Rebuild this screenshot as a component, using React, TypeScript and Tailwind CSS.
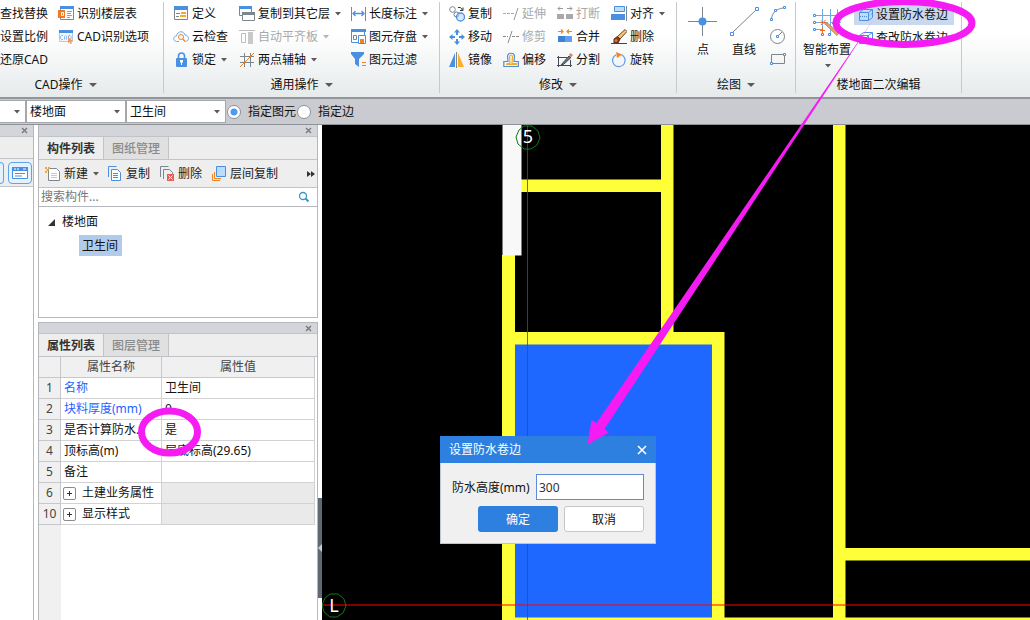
import React from "react";

type Kids = { children?: React.ReactNode };

function Svg({ children, size = "size-4" }: Kids & { size?: string }) {
  const box = size === "size-[30px]" ? "0 0 30 30" : "0 0 16 16";
  return (
    <svg viewBox={box} className={`${size} shrink-0`} fill="none" stroke="#7b868f" strokeWidth="1" aria-hidden="true">
      {children}
    </svg>
  );
}

function Caret({ dim = false }: { dim?: boolean }) {
  return (
    <svg viewBox="0 0 6 4" className="ml-[5px] h-1 w-1.5 shrink-0" fill={dim ? "#b4b4b4" : "#5a5a5a"} aria-hidden="true">
      <path d="M0 0h6L3 3.5z" />
    </svg>
  );
}

const B = "#4a90e2";
const O = "#ee8426";

const IcFloorTable = () => (
  <Svg>
    <path d="M2.500 2.500h13v11h-13z" fill="#fff" />
    <path d="M2 0h14v3H2z" fill={B} stroke="none" />
    <path d="M0 4h7v8H0z" fill="#f07a22" stroke="none" />
    <path d="M3.500 6.500h2v3h-2z" stroke="#fff" />
    <path d="M9 5.500h5M9 7.500h4M9 9.500h5M9 11.500h3" stroke="#9aa3aa" />
  </Svg>
);
const IcCad = () => (
  <Svg>
    <path d="M1.500 1.500h13v11h-13z" fill="#f2f7fd" stroke="#b5cbe4" />
    <path d="M1 1h14v3H1z" fill={B} stroke="none" />
    <path d="M5 6.500H3.500l-1 1v2l1 1H5M6.500 10.500v-3l1-1 1 1v3M10.500 6.500v4H12l1-1v-2l-1-1z" stroke="#8db4e2" />
    <path d="M10 8l5 4-2 .5 1 2-1.500.6-.8-2L10 14.500z" fill="#f09a6a" stroke="none" />
  </Svg>
);
const IcDefine = () => (
  <Svg>
    <path d="M1.500 2.500h13v11h-13z" fill="#fff" />
    <path d="M1 0h14v4H1z" fill={B} stroke="none" />
    <path d="M3 7.500h4M3 10.500h3" />
    <path d="M8 6h5v2H8zM7 9h6v2H7z" fill="#f9a82a" stroke="none" />
  </Svg>
);
const IcCloud = () => (
  <Svg>
    <path d="M6 12.500H3.500C-.5 12 0 7 3.500 7 4.500 1.500 11 1.500 12 6c4.500.5 4.500 6 .5 6.500" stroke="#6ba6ea" />
    <circle cx="8" cy="8" r="2.500" stroke={O} />
    <path d="M10 10l2 2.500" stroke={O} strokeWidth="1.500" />
  </Svg>
);
const IcLock = () => (
  <Svg>
    <path d="M5.500 7V4a3 3 0 0 1 6 0v3" stroke={B} strokeWidth="1.600" />
    <rect x="3" y="6" width="11" height="9" rx="1" fill={B} stroke="none" />
    <path d="M8.500 8v2.500" stroke="#fff" strokeWidth="3" />
    <path d="M8.500 10v3" stroke="#fff" />
  </Svg>
);
const IcCopyFloors = () => (
  <Svg>
    <path d="M.5 1.500h12v8H.500z" fill="#fff" stroke={B} />
    <path d="M0 0h13v3H0z" fill={B} stroke="none" />
    <path d="M3.500 7.500h12v7h-12z" fill="#fff" />
    <path d="M3 6h13v3H3z" fill="#7b868f" stroke="none" />
  </Svg>
);
const IcAlignSlab = () => (
  <Svg>
    <path d="M0 1.500h16M2.500 4.500h4v9h-4z" stroke="#bdbdbd" />
    <path d="M9 3h5v12H9z" fill="#c9c9c9" stroke="none" />
  </Svg>
);
const IcTwoAxis = () => (
  <Svg>
    <path d="M5.500 1v14M11.500 1v14M1 4.500h14M1 10.500h14" />
    <path d="M1 15L15 1" stroke={O} />
  </Svg>
);
const IcLength = () => (
  <Svg>
    <path d="M1.500 1v14M15.500 1v14" />
    <path d="M3 7.500h11M5.500 5L3 7.500 5.500 10M11.500 5L14 7.500 11.500 10" stroke={B} strokeWidth="1.300" />
  </Svg>
);
const IcSave = () => (
  <Svg>
    <path d="M1.500 1.500h13v12h-13z" fill="#fff" stroke={B} />
    <path d="M1 0h15v3H1z" fill={B} stroke="none" />
    <path d="M3.500 6.500h3v4h-3z" />
    <path d="M8.500 6.500h7v8h-7z" fill="#fff" stroke={B} />
    <path d="M10 10h4v4h-4z" fill={O} stroke="none" />
  </Svg>
);
const IcFilter = () => (
  <Svg>
    <path d="M1 0h13v2L9 7v8l-4-3V7L1 2z" fill={B} stroke="none" />
    <path d="M12 10.500h4M12 13.500h4" stroke={O} />
  </Svg>
);
const IcCopy3 = () => (
  <Svg>
    <circle cx="3.500" cy="3.500" r="2.800" />
    <path d="M9 1.500h2.500L13.500 4M14 1.500v3h-3" stroke="#333" />
    <circle cx="7.500" cy="8.500" r="2.500" stroke="#6d7a86" />
    <circle cx="11.500" cy="11" r="4" fill="#b9dcff" fillOpacity=".6" stroke={B} strokeWidth="1.300" />
  </Svg>
);
const IcMove = () => (
  <Svg>
    <path d="M8 0l3 3.500H9V6H7V3.500H5zM8 16l3-3.500H9V10H7v2.500H5zM0 8l3.500-3v2H6v2H3.500v2zM16 8l-3.500-3v2H10v2h2.500v2z" fill={B} stroke="none" />
  </Svg>
);
const IcMirror = () => (
  <Svg>
    <path d="M6 1v14H0z" fill={B} stroke="none" />
    <path d="M9 1v14h6z" fill="#f9b02a" stroke="none" />
    <path d="M7.500 0v16" />
  </Svg>
);
const IcExtend = () => (
  <Svg>
    <path d="M0 7.500h11" stroke="#ababab" strokeDasharray="3 1" />
    <path d="M15 2l-4 12" stroke="#9a9a9a" />
  </Svg>
);
const IcTrim = () => (
  <Svg>
    <path d="M0 7.500h5M9 7.500h7" stroke="#8a8a8a" strokeDasharray="3 1" />
    <path d="M9 2L5 14" stroke="#8a8a8a" />
  </Svg>
);
const IcOffset = () => (
  <Svg>
    <path d="M.8 14.500h14.500v-5H11L11.500 4C11 .3 5 .3 4.500 4L5 9.500H.8z" stroke={B} strokeWidth="1.200" />
    <path d="M3 12.500h11M3.500 11.500H7L6.500 4.500c.5-2 2.500-2 3 0L9 11.500h5" stroke="#f3ae20" strokeWidth="1.200" />
  </Svg>
);
const IcBreak = () => (
  <Svg>
    <path d="M0 8h7v5H0zM9 8h7v5H9z" fill="#a9a9a9" stroke="none" />
    <path d="M1 2.500h5M3 .5l-2 2 2 2M10 2.500h5M13 .5l2 2-2 2" stroke="#999" />
  </Svg>
);
const IcMerge = () => (
  <Svg>
    <path d="M1 7h7v6H1z" fill="#3d82d4" stroke="none" />
    <path d="M8 7h7v6H8z" fill="#5ea1ee" stroke="none" />
    <path d="M1 2.500h5M4 .5l2 2-2 2M15 2.500h-5M12 .5l-2 2 2 2" stroke={O} strokeWidth="1.200" />
  </Svg>
);
const IcSplit = () => (
  <Svg>
    <path d="M1.500 4v11M0 5.500h10M0 13.500h15M13.500 8v7" stroke="#444b55" />
    <path d="M4 13l8-9 2 1.500L7 12z" fill="#6b7685" stroke="#444b55" />
    <path d="M12 3l1.500-2L16 3l-1.500 2z" fill="#f07a50" stroke="none" />
  </Svg>
);
const IcAlign = () => (
  <Svg>
    <path d="M3.500.5h10v5h-10z" fill="#bcdcff" stroke={B} />
    <path d="M0 8h14v6H0z" fill={B} stroke="none" />
    <path d="M15.500 0v15" />
  </Svg>
);
const IcErase = () => (
  <Svg>
    <path d="M6 8l8-7.500 2 2L9 10z" fill="#ffc46a" stroke="#5b4634" />
    <path d="M3 10l3.500-2.500L9 10l-2 4H3z" fill="#8a3b22" stroke="#4b2c20" />
    <circle cx="5" cy="11.500" r="1.500" fill="#f06b3c" stroke="none" />
    <path d="M0 14.500h16" stroke="#444" />
  </Svg>
);
const IcRotate = () => (
  <Svg>
    <path d="M10 2.500a6.300 6.300 0 1 1-5 .3" stroke="#5c9de8" strokeWidth="1.200" />
    <path d="M5 0l6 2.500L6 6z" fill={O} stroke="none" />
  </Svg>
);
const IcArc = () => (
  <Svg>
    <path d="M1.500 13C2 7 6 3 13 2" />
    <path d="M.5 12.500h2v2h-2zM4.500 3.500h2v2h-2zM13.500.5h2v2h-2z" fill="#fff" stroke={B} />
  </Svg>
);
const IcCircle = () => (
  <Svg>
    <circle cx="7.500" cy="7.500" r="7" />
    <path d="M8 7l4-4" stroke={B} />
    <path d="M6.500 6.500h2v2h-2z" fill="#fff" stroke={B} />
  </Svg>
);
const IcRect = () => (
  <Svg>
    <path d="M1.500 2.500h13v9h-13z" />
    <path d="M.5 10.500h2v2h-2zM13.500 1.500h2v2h-2z" fill="#fff" stroke={B} />
  </Svg>
);
const IcBox = ({ edit = false }: { edit?: boolean }) => (
  <Svg>
    <path d="M1.500 5.500h9v8h-9zM1.500 5.500l4-3h9l-4 3M14.500 2.500v8l-4 3" stroke={B} />
    {edit ? <path d="M5 11l5-5M5 8v3h3" stroke={B} /> : <path d="M2 9.500h8l4-3" stroke={B} strokeDasharray="1 1" />}
  </Svg>
);

function Tool({ icon, text, caret, dim }: { icon?: React.ReactNode; text: string; caret?: boolean; dim?: boolean }) {
  return (
    <button type="button" disabled={dim} className={`flex h-[23px] items-center pb-px whitespace-nowrap ${dim ? "text-[#a9a9a9]" : ""}`}>
      {icon}
      <span className={icon ? "ml-[3px]" : ""}>{text}</span>
      {caret && <Caret dim={dim} />}
    </button>
  );
}

function Group({ title, width, pad = "", caret = true, children }: Kids & { title: string; width: string; pad?: string; caret?: boolean }) {
  return (
    <>
      <section className={`flex shrink-0 flex-col pt-[3px] ${width}`}>
        <div className="h-[69px]">{children}</div>
        <h2 className={`flex h-[25px] items-center justify-center ${pad}`}>
          {title}
          {caret && (
            <svg viewBox="0 0 8 4" className="ml-1.5 h-1 w-2" fill="#5a5a5a" aria-hidden="true">
              <path d="M0 0h8L4 4z" />
            </svg>
          )}
        </h2>
      </section>
      <div className="mt-0.5 mb-1 w-px shrink-0 bg-[#c6cacd]" />
    </>
  );
}

function Ribbon() {
  return (
    <header className="flex h-[99px] shrink-0 overflow-hidden border-b-2 border-[#92969b] bg-linear-to-b from-white from-35% to-[#e6eaeb]">
      <Group title="CAD操作" width="w-[163px]" pad="pr-8">
        <div className="flex gap-2.5">
          <div className="flex w-12 flex-col items-end">
            <Tool text="查找替换" />
            <Tool text="设置比例" />
            <Tool text="还原CAD" />
          </div>
          <div className="flex flex-col items-start">
            <Tool icon={<IcFloorTable />} text="识别楼层表" />
            <Tool icon={<IcCad />} text="CAD识别选项" />
          </div>
        </div>
      </Group>
      <Group title="通用操作" width="w-[275px]">
        <div className="grid grid-cols-[66px_111px_auto] pl-[9px]">
          <Tool icon={<IcDefine />} text="定义" />
          <Tool icon={<IcCopyFloors />} text="复制到其它层" caret />
          <Tool icon={<IcLength />} text="长度标注" caret />
          <Tool icon={<IcCloud />} text="云检查" />
          <Tool icon={<IcAlignSlab />} text="自动平齐板" caret dim />
          <Tool icon={<IcSave />} text="图元存盘" caret />
          <Tool icon={<IcLock />} text="锁定" caret />
          <Tool icon={<IcTwoAxis />} text="两点辅轴" caret />
          <Tool icon={<IcFilter />} text="图元过滤" />
        </div>
      </Group>
      <Group title="修改" width="w-[236px]">
        <div className="grid grid-cols-[54px_54px_54px_auto] pl-[9px]">
          <Tool icon={<IcCopy3 />} text="复制" />
          <Tool icon={<IcExtend />} text="延伸" dim />
          <Tool icon={<IcBreak />} text="打断" dim />
          <Tool icon={<IcAlign />} text="对齐" caret />
          <Tool icon={<IcMove />} text="移动" />
          <Tool icon={<IcTrim />} text="修剪" dim />
          <Tool icon={<IcMerge />} text="合并" />
          <Tool icon={<IcErase />} text="删除" />
          <Tool icon={<IcMirror />} text="镜像" />
          <Tool icon={<IcOffset />} text="偏移" />
          <Tool icon={<IcSplit />} text="分割" />
          <Tool icon={<IcRotate />} text="旋转" />
        </div>
      </Group>
      <Group title="绘图" width="w-[118px]">
        <div className="flex gap-[11px] pl-[11px]">
          <button type="button" className="flex flex-col items-center gap-[5px] pt-[3px]">
            <Svg size="size-[30px]">
              <path d="M14.500 1v29M0 15.500h29" />
              <circle cx="14.500" cy="15.500" r="4" fill={B} stroke="none" />
            </Svg>
            点
          </button>
          <button type="button" className="flex flex-col items-center gap-[5px] pt-[3px]">
            <Svg size="size-[30px]">
              <path d="M3 27L27 4" />
              <path d="M1.500 26.500h3v3h-3zM26.500 1.500h3v3h-3z" fill="#fff" stroke={B} />
            </Svg>
            直线
          </button>
          <div className="flex flex-col">
            <button type="button" aria-label="圆弧" className="flex h-[23px] items-center pb-px"><IcArc /></button>
            <button type="button" aria-label="圆" className="flex h-[23px] items-center pb-px"><IcCircle /></button>
            <button type="button" aria-label="矩形" className="flex h-[23px] items-center pb-px"><IcRect /></button>
          </div>
        </div>
      </Group>
      <Group title="楼地面二次编辑" width="w-[165px]" caret={false}>
        <div className="flex gap-[3px] pl-[7px]">
          <button type="button" className="flex flex-col items-center gap-[5px] pt-[3px]">
            <Svg size="size-[30px]">
              <path d="M10.500 3v25M18.500 3v25M25.500 3v13M3 9.500h26M3 16.500h13M3 23.500h8M18 16.500h11" stroke="#6ea8e6" />
              <path d="M1.500 8.500h2v2h-2zM1.500 15.500h2v2h-2zM1.500 22.500h2v2h-2zM9.500 27.500h2v2h-2zM16.500 27.500h2v2h-2z" fill="#fff" stroke={B} />
              <path d="M13 18l2-1.500L26.500 27l-1.500 2.500z" fill="#e3a266" stroke="#c98a55" />
              <path d="M9 14.500l4 4M13.500 14l-4.500 5M8 16.500h6M10.500 21v6M8 24.500h5M20 17l2 2" stroke="#ee6a26" />
            </Svg>
            智能布置
            <span className="-ml-1 flex h-1"><Caret /></span>
          </button>
          <div className="flex flex-col gap-[3px] pt-0.5">
            <button type="button" className="flex h-5 items-center gap-0.5 bg-[#c8d8ef] pr-1.5 pl-1 whitespace-nowrap">
              <IcBox />设置防水卷边
            </button>
            <button type="button" className="flex h-5 items-center gap-0.5 pr-1.5 pl-1 whitespace-nowrap">
              <IcBox edit />查改防水卷边
            </button>
          </div>
        </div>
      </Group>
    </header>
  );
}

function Picker({ label, value, width }: { label: string; value: string; width: string }) {
  return (
    <div className={`relative flex h-[23px] shrink-0 items-center border border-[#a6a7aa] bg-white ${width}`}>
      <select aria-label={label} className="h-full w-full appearance-none bg-transparent pl-[3px] outline-none">
        <option>{value}</option>
      </select>
      <svg viewBox="0 0 6 4" className="pointer-events-none absolute right-[5px] h-1 w-1.5" fill="#5a5a5a" aria-hidden="true">
        <path d="M0 0h6L3 3.500z" />
      </svg>
    </div>
  );
}

function Radio({ text, on }: { text: string; on?: boolean }) {
  return (
    <label className="ml-px flex shrink-0 items-center gap-[7px]">
      <input
        type="radio"
        name="scope"
        defaultChecked={on}
        className="size-3.5 appearance-none rounded-full border border-[#8d9094] bg-white checked:bg-[radial-gradient(circle,#4a9bf5_3px,white_4px)]"
      />
      {text}
    </label>
  );
}

function OptionsBar() {
  return (
    <div className="flex h-[26px] shrink-0 items-center border-b border-[#8e9297] bg-[#c9cbd0]">
      <Picker label="构件类型" value="" width="w-[26px] border-l-0" />
      <Picker label="类别" value="楼地面" width="w-[100px]" />
      <Picker label="构件" value="卫生间" width="w-[100px]" />
      <Radio text="指定图元" on />
      <Radio text="指定边" />
    </div>
  );
}

function Grip({ height = "h-3" }: { height?: string }) {
  return (
    <div className={`flex shrink-0 items-center justify-end border-b border-[#c0c3c7] bg-[#d4d5da] pr-[5px] ${height}`}>
      <button type="button" aria-label="关闭" className="flex">
        <svg viewBox="0 0 7 7" className="size-[7px]" stroke="#74777c" strokeWidth="1.300" aria-hidden="true">
          <path d="M1 1l5 5M6 1L1 6" />
        </svg>
      </button>
    </div>
  );
}

function Tabs({ a, b }: { a: string; b: string }) {
  return (
    <div role="tablist" className="flex h-[23px] shrink-0 border-b border-[#c0c3c7] bg-[#eee]">
      <button type="button" role="tab" aria-selected="true" className="w-[65px] border-r border-[#c0c3c7] pt-0.5 font-bold text-[#333]">{a}</button>
      <button type="button" role="tab" aria-selected="false" className="w-[65px] border-r border-[#c0c3c7] bg-[#e0e0e0] pt-0.5 font-medium text-[#8b8b8b]">{b}</button>
    </div>
  );
}

function ComponentPanel() {
  return (
    <section className="flex h-[193px] shrink-0 flex-col border border-t-0 border-[#b4b7bb] bg-white">
      <Grip />
      <Tabs a="构件列表" b="图纸管理" />
      <div className="flex h-7 shrink-0 items-center border-b border-[#c0c3c7] bg-[#eee] pt-px pr-0.5 pl-1.5 text-[#222]">
        <button type="button" className="flex w-[63px] items-center gap-[3px]">
          <Svg>
            <path d="M3.500 2.500h8l3 3v9h-11z" fill="#fff" />
            <path d="M6 7.500h6M6 9.500h6M6 11.500h6" stroke="#c5cad0" />
            <path d="M0 1h2v2H0zM3 1h2v2H3zM1.500 3h2v2h-2zM0 5h2v2H0z" fill="#f0a53a" stroke="none" />
          </Svg>
          <span className="flex items-center">新建<Caret /></span>
        </button>
        <button type="button" className="flex w-[52px] items-center gap-[2px]">
          <Svg>
            <path d="M.5 11V.500h8" stroke={B} />
            <path d="M3.500 3.500h6l3 3v8h-9z" fill="#fff" stroke={B} />
            <path d="M5 7.500h5M5 9.500h5M5 11.500h5" stroke={B} />
          </Svg>
          复制
        </button>
        <button type="button" className="flex w-[52px] items-center gap-[2px]">
          <Svg>
            <path d="M.5 11V.500h8M3.500 13V3.500h6l3 3V8" />
            <path d="M7 8h7v7H7z" fill="#e06055" stroke="none" />
            <path d="M8.500 9.500l4 4M12.500 9.500l-4 4" stroke="#fff" />
          </Svg>
          删除
        </button>
        <button type="button" className="flex items-center gap-[2px]">
          <Svg>
            <path d="M.5 8v6.500H8M2.500 6v6.500H9" stroke={O} />
            <path d="M4.500.5h9v10h-9z" fill="#bcdcff" stroke={B} />
          </Svg>
          层间复制
        </button>
        <button type="button" aria-label="更多" className="ml-auto">
          <svg viewBox="0 0 8 6" className="h-1.5 w-2" fill="#333" aria-hidden="true"><path d="M0 0l4 3-4 3zM4 0l4 3-4 3z" /></svg>
        </button>
      </div>
      <div className="flex h-[19px] shrink-0 items-center border-b border-[#b4b7bb] pr-[7px] pl-0.5">
        <input aria-label="搜索构件" placeholder="搜索构件..." className="min-w-0 flex-1 outline-none placeholder:text-[#777]" />
        <svg viewBox="0 0 12 12" className="size-3" fill="none" stroke="#3a95c9" aria-hidden="true">
          <circle cx="5" cy="5" r="3.500" strokeWidth="1.300" />
          <path d="M7.500 7.500l3 3" strokeWidth="2" />
        </svg>
      </div>
      <ul className="flex flex-col pt-1 pl-[9px]">
        <li>
          <div className="flex h-[22px] items-center gap-[7px]">
            <svg viewBox="0 0 7 7" className="size-[7px]" fill="#333" aria-hidden="true"><path d="M7 0v7H0z" /></svg>
            楼地面
          </div>
          <ul className="pt-0.5 pl-[31px]">
            <li className="w-[43px] bg-[#b1cbec] pl-[3px] leading-[21px]">卫生间</li>
          </ul>
        </li>
      </ul>
    </section>
  );
}

const rows = [
  { n: 1, name: "名称", value: "卫生间", link: true },
  { n: 2, name: "块料厚度(mm)", value: "0", link: true },
  { n: 3, name: "是否计算防水...", value: "是" },
  { n: 4, name: "顶标高(m)", value: "层底标高(29.65)" },
  { n: 5, name: "备注", value: "" },
  { n: 6, name: "土建业务属性", value: "", group: true },
  { n: 10, name: "显示样式", value: "", group: true },
];

function PropertyPanel() {
  return (
    <section className="flex min-h-0 flex-1 flex-col border border-b-0 border-[#b4b7bb] bg-white">
      <Grip height="h-[11px]" />
      <Tabs a="属性列表" b="图层管理" />
      <div className="min-h-0 flex-1 overflow-hidden bg-linear-to-r from-[#f0f0f0] from-[22px] to-white to-[22px] pr-0.5">
        <table className="w-full table-fixed border-separate border-spacing-0">
          <thead>
            <tr className="h-[21px] bg-[#f0f0f0] text-[#444]">
              <th className="w-[22px] border-r border-b border-[#c6c8cb] p-0" />
              <th className="w-[101px] border-r border-b border-[#c6c8cb] p-0 font-normal">属性名称</th>
              <th className="border-r border-b border-[#c6c8cb] p-0 font-normal">属性值</th>
            </tr>
          </thead>
          <tbody>
            {rows.map((r) => (
              <tr key={r.n} className="h-[21px]">
                <td className="border-r border-b border-[#c6c8cb] bg-[#f0f0f0] p-0 text-center text-[#444]">{r.n}</td>
                <td className={`border-r border-b border-[#d0d2d4] py-0 pr-0 whitespace-nowrap ${r.group ? "pl-0.5" : "pl-[3px]"} ${r.link ? "text-[#1f5fff]" : ""}`}>
                  {r.group ? (
                    <span className="flex items-center gap-1.5">
                      <button type="button" aria-label="展开" className="flex size-[13px] items-center justify-center rounded-xs border border-[#8b8b8b] bg-white">
                        <svg viewBox="0 0 5 5" className="size-[5px]" stroke="#333" aria-hidden="true"><path d="M0 2.500h5M2.500 0v5" /></svg>
                      </button>
                      {r.name}
                    </span>
                  ) : (
                    r.name
                  )}
                </td>
                <td className={`border-r border-b border-[#d0d2d4] py-0 pr-0 pl-[3px] ${r.group ? "bg-[#eaeaea]" : ""}`}>{r.value}</td>
              </tr>
            ))}
          </tbody>
        </table>
      </div>
    </section>
  );
}

function SideStrip() {
  return (
    <aside className="w-[34px] shrink-0 border-r border-[#b4b7bb] bg-white">
      <Grip />
      <div className="h-[22px] border-b border-[#c0c3c7] bg-[#eee]" />
      <div className="flex h-7 items-center gap-1 border-b border-[#c0c3c7] bg-[#eee]">
        <button type="button" aria-label="列表" className="h-[22px] w-1 rounded-r border border-l-0 border-[#5aa5ee] bg-[#e4f1fe]" />
        <button type="button" aria-label="卡片" className="flex h-[22px] w-6 items-center justify-center rounded border border-[#5aa5ee] bg-[#e4f1fe]">
          <Svg>
            <path d="M.5 2.500h15v11H.500z" fill="#fff" stroke={B} />
            <path d="M0 2h16v4H0z" fill={B} stroke="none" />
            <path d="M2 4h2M5 4h2M11 4h3" stroke="#fff" />
            <path d="M3 8.500h10M3 11h7" stroke={B} />
          </Svg>
        </button>
      </div>
    </aside>
  );
}

function Plan() {
  return (
    <svg className="absolute inset-0 h-full w-full" aria-hidden="true">
      <g transform="translate(-322 -125)">
        <g fill="#ffff37">
          <path d="M502 255h13v1000h-13zM521 179.500h140v12.500h-140zM661 125h12.500v208H661z" />
          <path d="M515 332h209.500v286H515z" />
          <path d="M833 125h12.500v1000H833zM845 548h2000v12.500H845zM515 617.500h2000v13H515z" />
        </g>
        <path d="M515 344.500h197v273H515z" fill="#1e68ff" />
        <path d="M502.500 125h19v130.500h-19z" fill="#f8f8f8" />
        <path d="M527 125h1v1500h-1z" fill="#f00" fillOpacity=".8" />
        <path d="M322 604h3000v2H322z" fill="#f00" fillOpacity=".5" />
        <g fill="none" stroke="#0b7a16">
          <path d="M524 126l8 0 6 5 2 7-3 7-6 4-7 0-6-5-2-7 3-7z" />
          <path d="M330 594l8 0 6 5 2 7-3 7-6 4-7 0-6-5-2-7 3-7z" />
        </g>
        <g fill="#fff" fontSize="18" textAnchor="middle" className="font-['Noto_Sans']">
          <text x="528" y="143">5</text>
          <text x="334" y="612">L</text>
        </g>
      </g>
    </svg>
  );
}

function Dialog() {
  return (
    <form
      role="dialog"
      aria-label="设置防水卷边"
      onSubmit={(e) => e.preventDefault()}
      className="absolute top-[311px] left-[118px] w-[216px] bg-[#f0f0f0]"
    >
      <div className="flex h-[27px] items-center justify-between bg-[#2d80e0] pr-[9px] pl-[9px] text-white">
        设置防水卷边
        <button type="button" aria-label="关闭" className="flex">
          <svg viewBox="0 0 10 10" className="size-2.5" stroke="#fff" strokeWidth="1.600" aria-hidden="true"><path d="M1 1l8 8M9 1L1 9" /></svg>
        </button>
      </div>
      <div className="flex flex-col gap-1.5 border border-t-0 border-[#b9c6d8] px-[11px] pt-[11px] pb-[11px]">
        <div className="flex items-center justify-between">
          <label htmlFor="height" className="pt-0.5 whitespace-nowrap">防水高度(mm)</label>
          <input id="height" defaultValue="300" className="h-[26px] w-[108px] border border-[#5f8bd8] bg-white px-[2px] text-[#333] outline-none" />
        </div>
        <div className="flex justify-end gap-1.5">
          <button type="submit" className="h-[26px] w-20 rounded-[3px] bg-[#2d80e0] pt-0.5 text-white">确定</button>
          <button type="button" className="h-[26px] w-20 rounded-[3px] border border-[#c6c6c6] bg-white pt-0.5">取消</button>
        </div>
      </div>
    </form>
  );
}

function Markup() {
  return (
    <svg className="pointer-events-none absolute inset-0 h-full w-full" fill="none" stroke="#f51cf3" strokeWidth="7" aria-hidden="true">
      <ellipse cx="904" cy="23" rx="68" ry="21.500" />
      <ellipse cx="169.500" cy="432" rx="28" ry="21" />
      <path d="M873 20L604.500 429l4.200 3.500-21.200 12 4-24.500 5 3z" fill="#f51cf3" stroke="none" />
    </svg>
  );
}

export default function App() {
  return (
    <div className="relative flex h-screen flex-col overflow-hidden bg-white font-['Noto_Sans','Noto_Sans_CJK_SC',sans-serif] text-xs leading-[18px] text-[#111]">
      <Ribbon />
      <OptionsBar />
      <main className="flex min-h-0 flex-1">
        <SideStrip />
        <div className="ml-1 flex w-[280px] shrink-0 flex-col gap-1">
          <ComponentPanel />
          <PropertyPanel />
        </div>
        <div className="flex w-1 shrink-0 flex-col justify-end pb-[22px]">
          <button type="button" aria-label="收起" className="flex h-[100px] items-center justify-center bg-[#5f6975]">
            <svg viewBox="0 0 4 8" className="h-2 w-1" fill="#c9ced4" aria-hidden="true"><path d="M4 0v8L0 4z" /></svg>
          </button>
        </div>
        <div className="relative min-w-0 flex-1 overflow-hidden bg-black">
          <Plan />
          <Dialog />
        </div>
      </main>
      <Markup />
    </div>
  );
}
